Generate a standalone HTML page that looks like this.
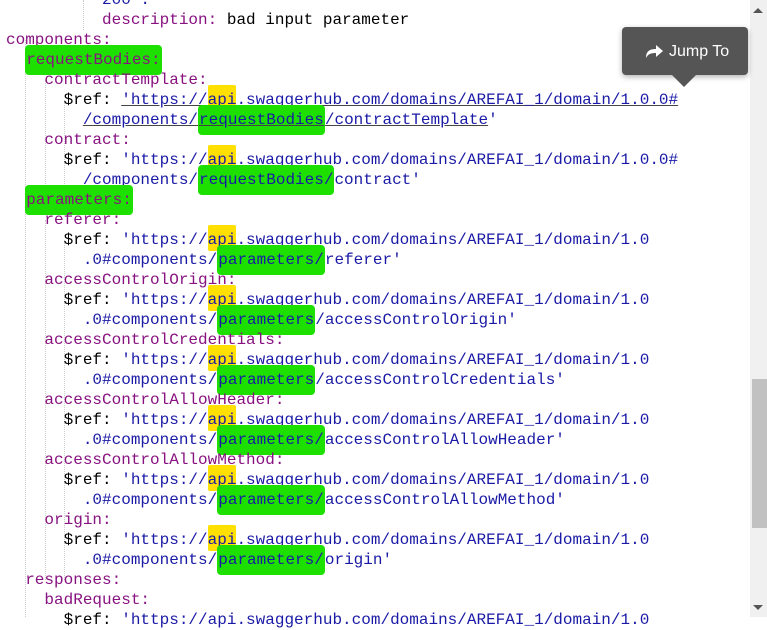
<!DOCTYPE html>
<html><head><style>
body{margin:0;width:767px;height:617px;overflow:hidden;background:#fff;position:relative;font-family:"Liberation Mono",monospace;font-size:16px}
.l{position:absolute;left:6px;height:20px;line-height:20px;white-space:pre;color:#000;margin-top:1px}
.k{color:#881280}.s{color:#1a1aa6}
.g{background:#1ee000;padding:6px 1px;border-radius:4px}
.y{background:#ffe000;padding:6px 0 2px;border-radius:2px}
.u{text-decoration:underline;text-decoration-color:#444}
.guide{position:absolute;top:0;width:0;border-left:1px dotted #ccc}
#sb{position:absolute;left:750px;top:0;width:17px;height:617px;background:#f0f0f0}
#th{position:absolute;left:752px;top:379px;width:15px;height:149px;background:#c1c1c1}
#tip{position:absolute;left:622px;top:27px;width:126px;height:48px;background:#555;border-radius:4px;box-shadow:0 2px 6px rgba(0,0,0,.3);color:#fff;font-family:"Liberation Sans",sans-serif;font-size:16px;line-height:48px}
#arr{position:absolute;left:672px;top:75px;width:0;height:0;border-left:12px solid transparent;border-right:12px solid transparent;border-top:12px solid #555}
</style></head><body>
<div class="guide" style="left:25px;top:40px;height:577px"></div>
<div class="guide" style="left:45px;top:80px;height:120px"></div>
<div class="guide" style="left:45px;top:220px;height:360px"></div>
<div class="guide" style="left:64px;top:240px;height:340px"></div>
<div class="guide" style="left:64px;top:100px;height:100px"></div>
<div class="guide" style="left:83px;top:0;height:30px"></div>

<div class="l s" style="top:-11px">         '200':</div>
<div class="l" style="top:9px">          <span class="k">description:</span> bad input parameter</div>
<div class="l k" style="top:29px">components:</div>
<div class="l k" style="top:49px">  <span class="g">requestBodies:</span></div>
<div class="l k" style="top:69px">    contractTemplate:</div>
<div class="l" style="top:89px">      $ref: <span class="s u">'https://<span class="y">api</span>.swaggerhub.com/domains/AREFAI_1/domain/1.0.0#</span></div>
<div class="l s" style="top:109px">        <span class="u">/components/<span class="g">requestBodies</span>/contractTemplate</span>'</div>
<div class="l k" style="top:129px">    contract:</div>
<div class="l" style="top:149px">      $ref: <span class="s">'https://<span class="y">api</span>.swaggerhub.com/domains/AREFAI_1/domain/1.0.0#</span></div>
<div class="l s" style="top:169px">        /components/<span class="g">requestBodies/</span>contract'</div>
<div class="l k" style="top:189px">  <span class="g">parameters:</span></div>
<div class="l k" style="top:209px">    referer:</div>
<div class="l" style="top:229px">      $ref: <span class="s">'https://<span class="y">api</span>.swaggerhub.com/domains/AREFAI_1/domain/1.0</span></div>
<div class="l s" style="top:249px">        .0#components/<span class="g">parameters/</span>referer'</div>
<div class="l k" style="top:269px">    accessControlOrigin:</div>
<div class="l" style="top:289px">      $ref: <span class="s">'https://<span class="y">api</span>.swaggerhub.com/domains/AREFAI_1/domain/1.0</span></div>
<div class="l s" style="top:309px">        .0#components/<span class="g">parameters</span>/accessControlOrigin'</div>
<div class="l k" style="top:329px">    accessControlCredentials:</div>
<div class="l" style="top:349px">      $ref: <span class="s">'https://<span class="y">api</span>.swaggerhub.com/domains/AREFAI_1/domain/1.0</span></div>
<div class="l s" style="top:369px">        .0#components/<span class="g">parameters</span>/accessControlCredentials'</div>
<div class="l k" style="top:389px">    accessControlAllowHeader:</div>
<div class="l" style="top:409px">      $ref: <span class="s">'https://<span class="y">api</span>.swaggerhub.com/domains/AREFAI_1/domain/1.0</span></div>
<div class="l s" style="top:429px">        .0#components/<span class="g">parameters/</span>accessControlAllowHeader'</div>
<div class="l k" style="top:449px">    accessControlAllowMethod:</div>
<div class="l" style="top:469px">      $ref: <span class="s">'https://<span class="y">api</span>.swaggerhub.com/domains/AREFAI_1/domain/1.0</span></div>
<div class="l s" style="top:489px">        .0#components/<span class="g">parameters/</span>accessControlAllowMethod'</div>
<div class="l k" style="top:509px">    origin:</div>
<div class="l" style="top:529px">      $ref: <span class="s">'https://<span class="y">api</span>.swaggerhub.com/domains/AREFAI_1/domain/1.0</span></div>
<div class="l s" style="top:549px">        .0#components/<span class="g">parameters/</span>origin'</div>
<div class="l k" style="top:569px">  responses:</div>
<div class="l k" style="top:589px">    badRequest:</div>
<div class="l" style="top:609px">      $ref: <span class="s">'https://api.swaggerhub.com/domains/AREFAI_1/domain/1.0</span></div>

<div id="sb"></div><div id="th"></div>
<div style="position:absolute;left:753px;top:8px;border-left:5px solid transparent;border-right:5px solid transparent;border-bottom:5px solid #555"></div>
<div style="position:absolute;left:753px;top:605px;border-left:5px solid transparent;border-right:5px solid transparent;border-top:5px solid #555"></div>

<div id="tip"><svg style="position:absolute;left:22px;top:16px" width="20" height="16" viewBox="0 0 20 16"><path d="M2 15 C2 8 6 6 12 6 L12 2 L19 8 L12 14 L12 10 C7 10 4 11 2 15Z" fill="#fff"/></svg><span style="position:absolute;left:47px;top:1px">Jump To</span></div>
<div id="arr"></div>
</body></html>
